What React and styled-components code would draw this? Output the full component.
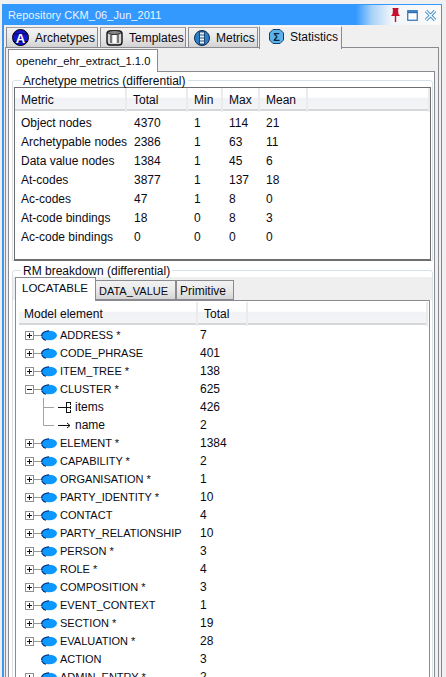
import React from 'react';
import styled, { createGlobalStyle } from 'styled-components';

const Global = createGlobalStyle`
  html, body { margin: 0; padding: 0; background: #f0f0f0; overflow: hidden; }
  * { box-sizing: border-box; }
  body { font-family: "Liberation Sans", Arial, sans-serif; font-size: 12px; color: #0a0a14; }
`;

const Page = styled.div`
  width: 446px; height: 677px; overflow: hidden; padding: 4px 0 0 2px; background: #f0f0f0;
`;
const Window = styled.div`
  width: 440px; height: 720px;
  border-left: 2px solid #3e97ee; border-right: 1px solid #3e97ee; border-top: 1px solid #3399ff;
  background: #f0f0f0;
`;
const TitleBar = styled.div`
  height: 20px; display: flex; align-items: center; padding: 0 5px 0 4px;
  background: linear-gradient(90deg, #3399ff 0, #3399ff 352px, #a8d2f8 368px, #f2f6fa 388px, #fafafa 100%);
`;
const Title = styled.span` flex: 1; color: #eaf4ff; font-size: 11px; line-height: 22px; letter-spacing: .05px; `;
const WinIcons = styled.div` display: flex; align-items: center; gap: 7px; `;

const TabStrip = styled.div`
  height: 23px; display: flex; align-items: flex-end; gap: 2px; padding-left: 2px; margin-bottom: -1px;
`;
const OuterTab = styled.div`
  position: relative; z-index: ${p => (p.$active ? 2 : 1)};
  width: ${p => p.$w}px; height: ${p => (p.$active ? 23 : 21)}px; margin-bottom: ${p => (p.$active ? -1 : 0)}px;
  margin-left: ${p => p.$ml || 0}px;
  display: flex; align-items: center; gap: 6px; padding-left: ${p => (p.$active ? 9 : 5)}px; padding-bottom: ${p => (p.$active ? 3 : 0)}px;
  border: 1px solid #8a8a90; border-bottom: ${p => (p.$active ? 'none' : '1px solid #8a8a90')};
  border-top-color: ${p => (p.$active ? '#fff' : '#a0a0a4')};
  background: ${p => (p.$active ? '#f0f0f0' : 'linear-gradient(#f2f2f2, #e9e9e9 50%, #d3d3d3)')};
  font-size: 12px; white-space: nowrap;
`;
const OuterPanel = styled.div`
  margin-left: 1px; width: 434px; height: 680px; border: 1px solid #8a8a90; padding: 1px 0 0 2px; background: #f0f0f0;
`;
const InnerStrip = styled.div` height: 22px; display: flex; align-items: flex-end; `;
const InnerTab = styled.div`
  position: relative; z-index: 2; width: 150px; height: 23px; margin-bottom: -1px;
  padding: 0 0 1px 7px; display: flex; align-items: center;
  background: #fff; border: 1px solid #8a8a90; border-bottom: none; font-size: 11.2px;
`;
const InnerPanel = styled.div`
  width: 427px; height: 640px; border: 1px solid #8a8a90; background: #fff; padding: 8px 0 0 3px;
`;
const Group = styled.div`
  width: 421px; border: 1px solid #d8e1e8; border-radius: 3px 3px 0 0; padding: 0 1px;
  height: ${p => p.$h}px; margin-bottom: ${p => p.$mb || 0}px;
`;
const Legend = styled.div`
  width: fit-content; height: 14px; line-height: 16px; margin: -8px 0 0 7px; padding: 0 2px; background: #fff; font-size: 12px;
`;
const MetricsBox = styled.div`
  width: 417px; height: 174px; border: 1px solid #6e6e70; border-bottom-width: 2px; background: #fff;
`;
const HeadRow = styled.div`
  display: grid; grid-template-columns: ${p => p.$cols}; height: 23px;
  margin-left: ${p => p.$ml || 0}px; margin-right: ${p => p.$mr || 0}px;
  background: linear-gradient(#fff 0, #fff 45%, #f1f2f5 46%, #f3f4f6 100%);
  border-bottom: 2px solid #d6d7da;
`;
const HeadCell = styled.div`
  padding-left: ${p => p.$pl || 6}px; line-height: 24px; border-right: 2px solid #ebebee; white-space: nowrap; font-size: 12px;
`;
const MetricRows = styled.div` padding-top: 3px; `;
const MetricRow = styled.div`
  display: grid; grid-template-columns: 112px 60px 35px 37px 40px; height: 19px; line-height: 19px; white-space: nowrap;
`;
const MetricCell = styled.span` padding-left: ${p => p.$pl || 7}px; `;

const SubStrip = styled.div`
  height: 23px; margin: 0 -1px; padding-left: 2px; display: flex; align-items: flex-end; background: #efefef;
`;
const SubTab = styled.div`
  position: relative; z-index: ${p => (p.$active ? 2 : 1)};
  width: ${p => p.$w}px; height: ${p => (p.$active ? 24 : 20)}px; margin-bottom: ${p => (p.$active ? -1 : 0)}px;
  margin-left: ${p => p.$ml || 0}px;
  padding-left: ${p => p.$pl}px; line-height: 20px;
  border: 1px solid #8a8a90; border-bottom: ${p => (p.$active ? 'none' : '1px solid #8a8a90')};
  background: ${p => (p.$active ? '#fff' : 'linear-gradient(#f2f2f2, #e9e9e9 50%, #d5d5d5)')};
  font-size: ${p => p.$fs || 12}px; white-space: nowrap;
`;
const TreeBox = styled.div`
  width: 415px; height: 500px; margin-left: 1px; border: 1px solid #8a8a90; background: #fff; padding-top: 1px;
`;
const TreeRows = styled.div` padding-top: 1px; `;
const TreeRow = styled.div`
  display: flex; align-items: center; height: 18px; padding-left: 4px; white-space: nowrap;
`;
const RowName = styled.span`
  width: ${p => p.$w}px; flex: none; margin-left: ${p => p.$ml}px; font-size: ${p => p.$fs}px;
`;
const Gutter = styled.span` width: ${p => p.$w}px; height: 18px; flex: none; display: block; `;

const A = () => (
  <svg width="17" height="17" viewBox="0 0 17 17">
    <circle cx="8.5" cy="8.5" r="8" fill="#1414c8" stroke="#000" />
    <path d="M1 5h15M1 12.5h15" stroke="#000" strokeWidth="1" opacity=".6" />
    <text x="8.5" y="14" textAnchor="middle" fontSize="13" fontWeight="700" fontFamily="Liberation Sans" fill="#fff">A</text>
  </svg>
);
const T = () => (
  <svg width="17" height="17" viewBox="0 0 17 17">
    <rect x="1" y="2" width="15" height="14" rx="3" fill="#d8d8d8" stroke="#111" strokeWidth="1.4" />
    <ellipse cx="8.5" cy="3.5" rx="6.5" ry="2" fill="#888" stroke="#222" />
    <path d="M5 6v8M12 6v8" stroke="#555" strokeWidth="1.5" />
    <path d="M7 6h3v8H7z" fill="#fff" />
  </svg>
);
const M = () => (
  <svg width="16" height="16" viewBox="0 0 16 16">
    <circle cx="8" cy="8" r="7.5" fill="#2c7fc6" stroke="#0a2a50" />
    <path d="M5.5 2h5v12h-5z" fill="#e8f2fa" stroke="#0a2a50" strokeWidth=".8" />
    <path d="M6 5h4M6 8h4M6 11h4" stroke="#1f4f80" />
  </svg>
);
const S = () => (
  <svg width="15" height="15" viewBox="0 0 15 15">
    <path d="M4 .5h7L14.5 4v7L11 14.5H4L.5 11V4z" fill="#5cb2e8" stroke="#10416e" />
    <text x="7.5" y="11.5" textAnchor="middle" fontSize="11" fontWeight="700" fontFamily="Liberation Sans" fill="#05233f">Σ</text>
  </svg>
);
const Pin = () => (
  <svg width="9" height="14" viewBox="0 0 9 14">
    <path d="M1.5 0h6v1.5H7L7.5 6 9 8H0l1.5-2L2 1.5h-.5zM3.8 8h1.4v6H3.8z" fill="#c8102e" />
  </svg>
);
const Max = () => (
  <svg width="11" height="11" viewBox="0 0 11 11">
    <rect x=".75" y=".75" width="9.5" height="9.5" fill="#fff" stroke="#2a6fb4" strokeWidth="1.2" />
    <path d="M1 2.2h9" stroke="#2a6fb4" strokeWidth="2" />
  </svg>
);
const Close = () => (
  <svg width="11" height="11" viewBox="0 0 11 11">
    <path d="M1 1l9 9M10 1l-9 9" stroke="#3b8ac8" strokeWidth="3.2" />
    <path d="M1 1l9 9M10 1l-9 9" stroke="#fff" strokeWidth="1.4" />
  </svg>
);

const Node = ({ exp, open }) => (
  <Gutter $w={38}>
    <svg width="38" height="18" viewBox="0 0 38 18">
      {exp && <>
        <rect x="5.5" y="5.5" width="8" height="8" fill="#fff" stroke="#8f8f8f" />
        <path d={open ? 'M7 9.5h5' : 'M7 9.5h5M9.5 7v5'} stroke="#111" />
        <path d="M14 9.5h7" stroke="#999" />
      </>}
      <ellipse cx="29" cy="9.5" rx="8" ry="4.8" fill="#0c98ff" />
      <path d="M21.6 10C21.8 7 25 4.9 29 4.9M21.8 11C22.6 12.8 24 13.8 26 14.2" stroke="#0a2a70" strokeWidth="1.1" fill="none" />
    </svg>
  </Gutter>
);

const Child = ({ last, kind }) => (
  <Gutter $w={55}>
    <svg width="55" height="18" viewBox="0 0 55 18">
      <path d={last ? 'M23.5 0v9.5H34' : 'M23.5 0v18M23.5 9.5H34'} stroke="#a2a2a2" fill="none" />
      {kind === 'items'
        ? <path d="M38 9.5h8M46.5 4v11M46.5 4.5h4M46.5 9.5h4M46.5 14.5h4M50.5 4v3M50.5 8v3M50.5 12v3" stroke="#111" fill="none" />
        : <path d="M38 9.5h12M47 7l3 2.5-3 2.5" stroke="#111" fill="none" />}
    </svg>
  </Gutter>
);

const metrics = [
  ['Object nodes', '4370', '1', '114', '21'],
  ['Archetypable nodes', '2386', '1', '63', '11'],
  ['Data value nodes', '1384', '1', '45', '6'],
  ['At-codes', '3877', '1', '137', '18'],
  ['Ac-codes', '47', '1', '8', '0'],
  ['At-code bindings', '18', '0', '8', '3'],
  ['Ac-code bindings', '0', '0', '0', '0'],
];

const tree = [
  ['ADDRESS *', '7', 1], ['CODE_PHRASE', '401', 1], ['ITEM_TREE *', '138', 1],
  ['CLUSTER *', '625', 2], ['items', '426', 'items'], ['name', '2', 'name'],
  ['ELEMENT *', '1384', 1], ['CAPABILITY *', '2', 1], ['ORGANISATION *', '1', 1],
  ['PARTY_IDENTITY *', '10', 1], ['CONTACT', '4', 1], ['PARTY_RELATIONSHIP', '10', 1],
  ['PERSON *', '3', 1], ['ROLE *', '4', 1], ['COMPOSITION *', '3', 1],
  ['EVENT_CONTEXT', '1', 1], ['SECTION *', '19', 1], ['EVALUATION *', '28', 1],
  ['ACTION', '3', 0], ['ADMIN_ENTRY *', '2', 1],
];

export default function App() {
  return (
    <Page>
      <Global />
      <Window>
        <TitleBar>
          <Title>Repository CKM_06_Jun_2011</Title>
          <WinIcons><Pin /><Max /><Close /></WinIcons>
        </TitleBar>
        <TabStrip>
          <OuterTab $w={92}><A />Archetypes</OuterTab>
          <OuterTab $w={86}><T />Templates</OuterTab>
          <OuterTab $w={70}><M />Metrics</OuterTab>
          <OuterTab $active $w={83} $ml={-1}><S />Statistics</OuterTab>
        </TabStrip>
        <OuterPanel>
          <InnerStrip><InnerTab>openehr_ehr_extract_1.1.0</InnerTab></InnerStrip>
          <InnerPanel>
            <Group $h={181} $mb={9}>
              <Legend>Archetype metrics (differential)</Legend>
              <MetricsBox>
                <HeadRow $cols="112px 61px 35px 37px 48px 1fr">
                  <HeadCell>Metric</HeadCell>
                  <HeadCell>Total</HeadCell>
                  <HeadCell>Min</HeadCell>
                  <HeadCell>Max</HeadCell>
                  <HeadCell>Mean</HeadCell>
                  <HeadCell />
                </HeadRow>
                <MetricRows>
                  {metrics.map(r => (
                    <MetricRow key={r[0]}>
                      <MetricCell $pl={6}>{r[0]}</MetricCell>
                      <MetricCell $pl={7}>{r[1]}</MetricCell>
                      <MetricCell>{r[2]}</MetricCell>
                      <MetricCell $pl={7}>{r[3]}</MetricCell>
                      <MetricCell $pl={7}>{r[4]}</MetricCell>
                    </MetricRow>
                  ))}
                </MetricRows>
              </MetricsBox>
            </Group>
            <Group $h={500}>
              <Legend>RM breakdown (differential)</Legend>
              <SubStrip>
                <SubTab $active $w={81} $pl={6} $fs={11.5}>LOCATABLE</SubTab>
                <SubTab $w={81} $pl={3} $ml={-1} $fs={11}>DATA_VALUE</SubTab>
                <SubTab $w={58} $pl={3}>Primitive</SubTab>
              </SubStrip>
              <TreeBox>
                <HeadRow $cols="179px 50px 1fr" $ml={3} $mr={1}>
                  <HeadCell $pl={5}>Model element</HeadCell>
                  <HeadCell>Total</HeadCell>
                  <HeadCell />
                </HeadRow>
                <TreeRows>
                  {tree.map(([name, total, kind]) => {
                    const child = typeof kind === 'string';
                    return (
                      <TreeRow key={name}>
                        {child
                          ? <Child kind={kind} last={kind === 'name'} />
                          : <Node exp={kind > 0} open={kind === 2} />}
                        <RowName $w={child ? 125 : 140} $ml={child ? 0 : 2} $fs={child ? 12 : 11}>{name}</RowName>
                        <span>{total}</span>
                      </TreeRow>
                    );
                  })}
                </TreeRows>
              </TreeBox>
            </Group>
          </InnerPanel>
        </OuterPanel>
      </Window>
    </Page>
  );
}
